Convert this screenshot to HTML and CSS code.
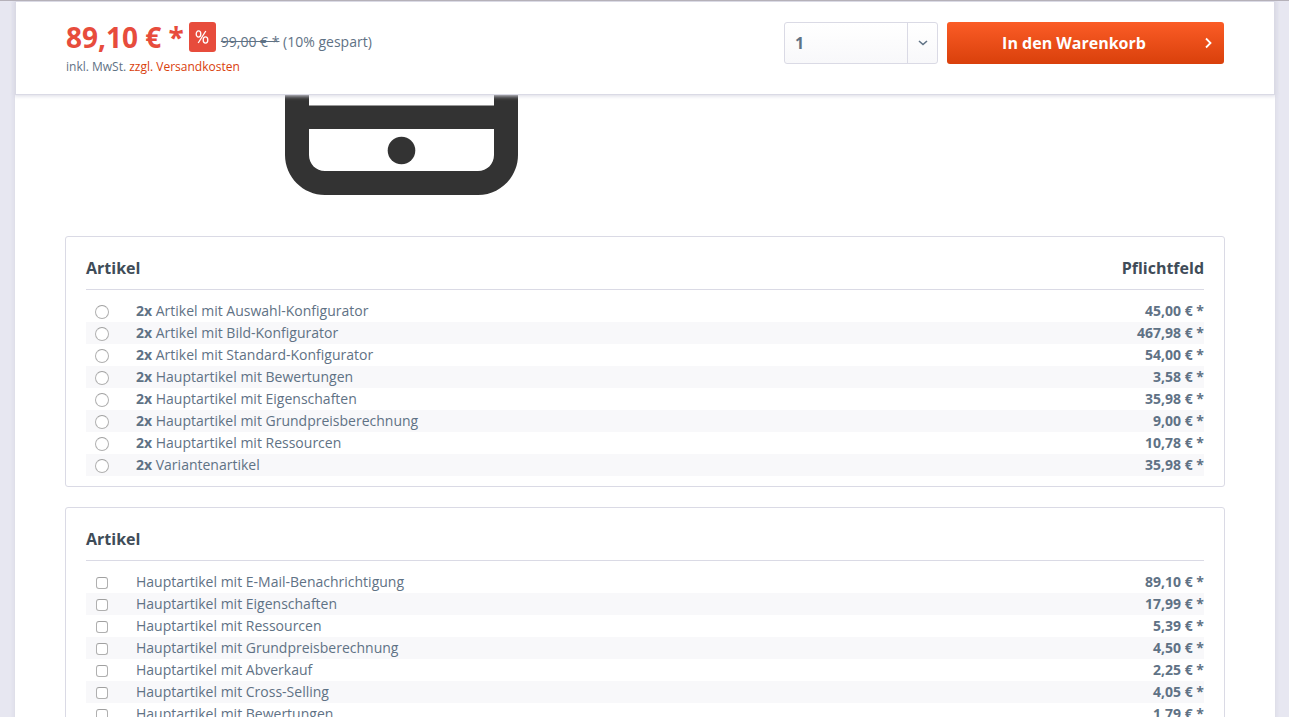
FILE: index.html
```
<!DOCTYPE html>
<html lang="de">
<head>
<meta charset="utf-8">
<title>Artikel-Bundle</title>
<link rel="stylesheet" href="styles.css">
</head>
<body>
<div class="page">
  <header class="buybox">
    <div class="price">
      <div class="price-line">
        <strong class="price-value">89,10&nbsp;€ *</strong>
        <span class="discount-badge"><svg width="14" height="14" viewBox="0 0 14 14" fill="none" stroke="#fff" stroke-width="1.3" aria-label="Rabatt"><ellipse cx="3.5" cy="4" rx="2.3" ry="3.1"/><ellipse cx="10.5" cy="10" rx="2.3" ry="3.1"/><path d="M10.8 1 3.2 13"/></svg></span>
        <span class="price-old"><s>99,00&nbsp;€ *</s> (10% gespart)</span>
      </div>
      <p class="tax">inkl. MwSt. <a href="#versand">zzgl. Versandkosten</a></p>
    </div>
    <form class="order">
      <div class="quantity">
        <select class="quantity-select" aria-label="Menge"><option>1</option><option>2</option><option>3</option></select>
        <svg class="quantity-arrow" width="10" height="6" viewBox="0 0 10 6" fill="none" stroke="#5f7285" stroke-width="1.6"><path d="M1 1l4 3.500 4-3.500"/></svg>
      </div>
      <button class="buy" type="button"><span class="buy-text">In den Warenkorb</span><svg class="buy-arrow" width="7" height="12" viewBox="0 0 7 12" fill="none" stroke="#fff" stroke-width="1.8"><path d="M1 1.500l4.500 4.500L1 10.500"/></svg></button>
    </form>
  </header>
  <main class="content">
    <div class="gallery">
      <svg class="phone" width="233" height="100" viewBox="0 -1 233 100" role="img" aria-label="Smartphone">
        <path fill="#333" fill-rule="evenodd" d="M0 -1H24V9.500H209V-1H233V59C233 81 215 99 193 99H40C18 99 0 81 0 59ZM24 33V59C24 68 31 75 40 75H193C202 75 209 68 209 59V33Z"/>
        <circle cx="116.500" cy="54.500" r="13.800" fill="#333"/>
      </svg>
    </div>
    <section class="panel">
      <div class="panel-head"><h2>Artikel</h2><strong>Pflichtfeld</strong></div>
      <table class="items">
        <tr><td class="pick"><input type="radio" name="a" id="a1"></td><td><label for="a1"><b>2x</b> Artikel mit Auswahl-Konfigurator</label></td><td class="amount">45,00&nbsp;€ *</td></tr>
        <tr><td class="pick"><input type="radio" name="a" id="a2"></td><td><label for="a2"><b>2x</b> Artikel mit Bild-Konfigurator</label></td><td class="amount">467,98&nbsp;€ *</td></tr>
        <tr><td class="pick"><input type="radio" name="a" id="a3"></td><td><label for="a3"><b>2x</b> Artikel mit Standard-Konfigurator</label></td><td class="amount">54,00&nbsp;€ *</td></tr>
        <tr><td class="pick"><input type="radio" name="a" id="a4"></td><td><label for="a4"><b>2x</b> Hauptartikel mit Bewertungen</label></td><td class="amount">3,58&nbsp;€ *</td></tr>
        <tr><td class="pick"><input type="radio" name="a" id="a5"></td><td><label for="a5"><b>2x</b> Hauptartikel mit Eigenschaften</label></td><td class="amount">35,98&nbsp;€ *</td></tr>
        <tr><td class="pick"><input type="radio" name="a" id="a6"></td><td><label for="a6"><b>2x</b> Hauptartikel mit Grundpreisberechnung</label></td><td class="amount">9,00&nbsp;€ *</td></tr>
        <tr><td class="pick"><input type="radio" name="a" id="a7"></td><td><label for="a7"><b>2x</b> Hauptartikel mit Ressourcen</label></td><td class="amount">10,78&nbsp;€ *</td></tr>
        <tr><td class="pick"><input type="radio" name="a" id="a8"></td><td><label for="a8"><b>2x</b> Variantenartikel</label></td><td class="amount">35,98&nbsp;€ *</td></tr>
      </table>
    </section>
    <section class="panel">
      <div class="panel-head"><h2>Artikel</h2></div>
      <table class="items">
        <tr><td class="pick"><input type="checkbox" id="b1"></td><td><label for="b1">Hauptartikel mit E-Mail-Benachrichtigung</label></td><td class="amount">89,10&nbsp;€ *</td></tr>
        <tr><td class="pick"><input type="checkbox" id="b2"></td><td><label for="b2">Hauptartikel mit Eigenschaften</label></td><td class="amount">17,99&nbsp;€ *</td></tr>
        <tr><td class="pick"><input type="checkbox" id="b3"></td><td><label for="b3">Hauptartikel mit Ressourcen</label></td><td class="amount">5,39&nbsp;€ *</td></tr>
        <tr><td class="pick"><input type="checkbox" id="b4"></td><td><label for="b4">Hauptartikel mit Grundpreisberechnung</label></td><td class="amount">4,50&nbsp;€ *</td></tr>
        <tr><td class="pick"><input type="checkbox" id="b5"></td><td><label for="b5">Hauptartikel mit Abverkauf</label></td><td class="amount">2,25&nbsp;€ *</td></tr>
        <tr><td class="pick"><input type="checkbox" id="b6"></td><td><label for="b6">Hauptartikel mit Cross-Selling</label></td><td class="amount">4,05&nbsp;€ *</td></tr>
        <tr><td class="pick"><input type="checkbox" id="b7"></td><td><label for="b7">Hauptartikel mit Bewertungen</label></td><td class="amount">1,79&nbsp;€ *</td></tr>
      </table>
    </section>
  </main>
</div>
</body>
</html>
```
FILE: styles.css
```
* { box-sizing: border-box; }
html { scrollbar-width: none; background: #e7e7f1; }
body {
  margin: 0;
  padding: 0 14px 0 15px;
  border-top: 1px solid #b5b1b9;
  font: 14px/22px "Open Sans", "Noto Sans", sans-serif;
  color: #5f7285;
}
.page {
  background: #fff;
  box-shadow: 0 0 4px 1px #dadae5;
}
.buybox {
  position: sticky;
  top: 0;
  z-index: 1;
  display: flex;
  justify-content: space-between;
  align-items: flex-start;
  gap: 20px;
  min-height: 94px;
  padding: 20px 50px 16px;
  background: #fff;
  border: 1px solid #dadae5;
  box-shadow: 0 0 4px 1px #dadae5;
}
.price-line { display: flex; align-items: center; height: 30px; }
.price-value {
  margin-right: 5px;
  font-size: 28px;
  line-height: 30px;
  color: #e74c3c;
}
.discount-badge {
  display: grid;
  place-items: center;
  width: 27px;
  height: 30px;
  margin-right: 5px;
  background: #e74c3c;
  border-radius: 3px;
}
.price-old { padding-top: 10px; line-height: 20px; }
.tax { margin: 5px 0 0; font-size: 12px; line-height: 20px; }
.tax a { color: #d9400b; text-decoration: none; }
.order { display: flex; gap: 9px; flex: 0 1 440px; }
.quantity { position: relative; flex: 0 0 154px; }
.quantity-select {
  appearance: none;
  display: block;
  width: 100%;
  height: 42px;
  padding: 0 40px 0 10px;
  border: 1px solid #dadae5;
  border-radius: 3px;
  background: linear-gradient(#dadae5, #dadae5) right 29px top / 1px 100% no-repeat, linear-gradient(#fff, #f8f8fa);
  color: #5f7285;
  font: bold 16px/24px "Open Sans", "Noto Sans", sans-serif;
}
.quantity-arrow {
  position: absolute;
  right: 10px;
  top: 18px;
  pointer-events: none;
}
.buy {
  display: flex;
  align-items: center;
  flex: 1;
  height: 42px;
  padding: 0 12px 0 10px;
  border: 0;
  border-radius: 3px;
  background: linear-gradient(#fb5c26, #d9400b);
  color: #fff;
  font: bold 16px/24px "Open Sans", "Noto Sans", sans-serif;
}
.buy-text { flex: 1; }
.buy-arrow { margin-left: 14px; }
.content { padding: 0 50px 20px; }
.gallery { height: 141px; padding-left: 220px; }
.phone { display: block; }
.panel {
  margin-bottom: 20px;
  padding: 0 20px 10px;
  border: 1px solid #dadae5;
  border-radius: 3px;
}
.panel-head {
  display: flex;
  justify-content: space-between;
  margin-bottom: 10px;
  padding: 19px 0 9px;
  border-bottom: 1px solid #dadae5;
  color: #3f4c58;
  font-size: 16px;
  line-height: 24px;
}
.panel-head h2 { margin: 0; font-size: inherit; }
.items { width: 100%; border-collapse: collapse; }
.items td { height: 22px; padding: 0; }
.items tr:nth-child(even) { background: #f8f8fa; }
.items .pick { width: 50px; padding: 2px 0 0; }
.items .amount { text-align: right; font-weight: bold; white-space: nowrap; }
.pick input {
  appearance: none;
  display: block;
  width: 12px;
  height: 12px;
  margin: 0 0 0 10px;
  border: 1px solid #b0b0b0;
  border-top-color: #a0a0a0;
  border-radius: 3px;
  background: #fff;
}
.pick input[type="radio"] {
  width: 14px;
  height: 14px;
  margin-left: 9px;
  border-radius: 50%;
}
.pick input:checked { background: #5f7285; }
```
